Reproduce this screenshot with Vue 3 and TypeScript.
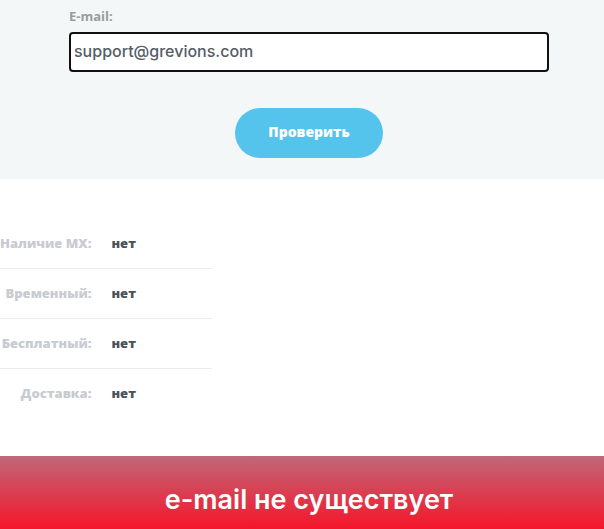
<script setup lang="ts">
import { ref } from 'vue'

interface CheckResult {
  label: string
  value: string
}

const email = ref<string>('support@grevions.com')

const results: CheckResult[] = [
  { label: 'Наличие MX:', value: 'нет' },
  { label: 'Временный:', value: 'нет' },
  { label: 'Бесплатный:', value: 'нет' },
  { label: 'Доставка:', value: 'нет' },
]
</script>

<template>
  <main class="page">
    <form class="check-form" @submit.prevent>
      <label class="field-label" for="email">E-mail:</label>
      <input id="email" v-model="email" class="field-input" type="text" spellcheck="false" />
      <button class="submit" type="submit">Проверить</button>
    </form>

    <table class="results">
      <tbody>
        <tr v-for="item in results" :key="item.label">
          <th scope="row">{{ item.label }}</th>
          <td>{{ item.value }}</td>
        </tr>
      </tbody>
    </table>

    <h2 class="verdict">e-mail не существует</h2>
  </main>
</template>

<style>
body {
  margin: 0;
  background: #ffffff;
}
</style>

<style scoped>
.page {
  display: flex;
  flex-direction: column;
  min-height: 100vh;
  overflow: hidden;
  font-family: 'Open Sans', 'Noto Sans', sans-serif;
}

.check-form {
  display: flex;
  flex-direction: column;
  padding: 8px 55px 21px 69px;
  background: #f3f7f8;
}

.field-label {
  margin-bottom: 8px;
  color: #999c9d;
  font-size: 13px;
  font-weight: 700;
  line-height: 16px;
}

.field-input {
  box-sizing: border-box;
  width: 100%;
  height: 40px;
  padding: 0 3px 2px;
  border: 2px solid #101010;
  border-radius: 4px;
  outline: none;
  background: #ffffff;
  color: #555d67;
  font-family: Inter, 'Open Sans', sans-serif;
  font-size: 16px;
  font-weight: 500;
}

.submit {
  align-self: center;
  min-width: 148px;
  height: 50px;
  margin-top: 36px;
  padding: 0 24px 2px;
  border: 0;
  border-radius: 25px;
  background: #54c4ec;
  color: #ffffff;
  font-family: inherit;
  font-size: 14px;
  font-weight: 800;
  line-height: 20px;
}

.results {
  width: 212px;
  margin: 40px 0 37px;
  border-collapse: separate;
  border-spacing: 0;
  font-size: 13px;
  line-height: 20px;
}

.results th,
.results td {
  height: 20px;
  padding: 14px 0 15px;
  border-bottom: 1px solid #ececee;
}

.results tr:last-child > * {
  border-bottom-color: transparent;
}

.results th {
  width: 91px;
  color: #c8cbd0;
  font-weight: 800;
  text-align: right;
  white-space: nowrap;
}

.results td {
  padding-left: 20px;
  color: #4b525c;
  font-weight: 800;
}

.verdict {
  flex: 1;
  margin: 0;
  padding: 26px 0 11px 14px;
  background: linear-gradient(#be6878, #f5152a);
  color: #ffffff;
  font-family: Inter, 'Open Sans', sans-serif;
  font-size: 27px;
  font-weight: 600;
  line-height: 36px;
  text-align: center;
}
</style>
